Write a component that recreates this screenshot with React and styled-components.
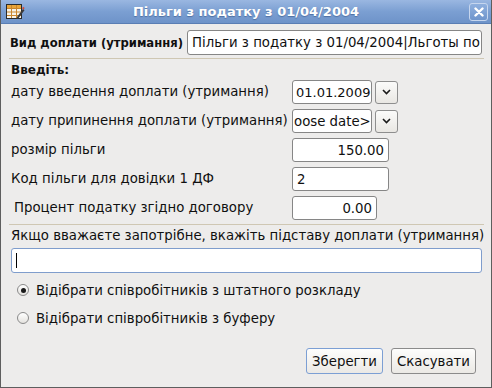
import React from "react";
import styled, { createGlobalStyle } from "styled-components";

const GlobalStyle = createGlobalStyle`
  html, body {
    margin: 0;
    padding: 0;
    background: #edeceb;
  }
  * {
    box-sizing: border-box;
  }
`;

const TableIcon = () => (
  <svg width="20" height="20" viewBox="0 0 20 20">
    <rect x="1.5" y="2.5" width="15" height="14" fill="#f7f4ea" stroke="#2b2b2b" />
    <rect x="2" y="3" width="14" height="3" fill="#e9a53a" />
    <path d="M2 6.5h14M2 10h14M2 13.5h14M6.5 3v13M11.5 3v13" stroke="#c9862e" strokeWidth="1" />
    <path d="M12 15l6-8 1.5 1.2-6 8-2 0.8z" fill="#3a3a3a" />
    <path d="M17 6.3l1.2-1.5 1.5 1.2-1.2 1.5z" fill="#d24a3a" />
  </svg>
);

const Chevron = () => (
  <svg width="9" height="6" viewBox="0 0 9 6">
    <path d="M1 1l3.5 3.5L8 1" fill="none" stroke="#1a1a1a" strokeWidth="1.6" />
  </svg>
);

const App = () => {
  return (
    <>
      <GlobalStyle />
      <Window>
        <TitleBar>
          <TitleIcon>
            <TableIcon />
          </TitleIcon>
          <TitleText>Пільги з податку з 01/04/2004</TitleText>
          <CloseButton>
            <svg width="10" height="10" viewBox="0 0 10 10">
              <path d="M1.5 1.5l7 7M8.5 1.5l-7 7" stroke="#ffffff" strokeWidth="2.4" strokeLinecap="round" />
            </svg>
          </CloseButton>
        </TitleBar>
        <Body>
          <TopRow>
            <BoldLabel>Вид доплати (утримання)</BoldLabel>
            <Field $flex readOnly value="Пільги з податку з 01/04/2004|Льготы по" />
          </TopRow>
          <Separator />
          <SectionTitle>Введіть:</SectionTitle>
          <FormGrid>
            <Label>дату введення доплати (утримання)</Label>
            <DateGroup>
              <Field $width={80} $date readOnly value="01.01.2009" />
              <DropButton>
                <Chevron />
              </DropButton>
            </DateGroup>

            <Label>дату припинення доплати (утримання)</Label>
            <DateGroup>
              <Field $width={80} $tight readOnly value="oose date>" />
              <DropButton>
                <Chevron />
              </DropButton>
            </DateGroup>

            <Label>розмір пільги</Label>
            <Field $width={97} $right readOnly value="150.00" />

            <Label>Код пільги для довідки 1 ДФ</Label>
            <Field $width={97} readOnly value="2" />

            <Label $indent>Процент податку згідно договору</Label>
            <Field $width={85} $right readOnly value="0.00" />
          </FormGrid>
          <Separator />
          <Label>Якщо вважаєте запотрібне, вкажіть підставу доплати (утримання)</Label>
          <WideField>
            <Caret />
          </WideField>
          <RadioList>
            <RadioRow>
              <RadioCircle $checked />
              <span>Відібрати співробітників з штатного розкладу</span>
            </RadioRow>
            <RadioRow>
              <RadioCircle />
              <span>Відібрати співробітників з буферу</span>
            </RadioRow>
          </RadioList>
          <ButtonBar>
            <ActionButton $focused>Зберегти</ActionButton>
            <ActionButton>Скасувати</ActionButton>
          </ButtonBar>
        </Body>
      </Window>
    </>
  );
};

export default App;

const Window = styled.div`
  width: 492px;
  height: 388px;
  display: flex;
  flex-direction: column;
  background: #edeceb;
  border: 1px solid #5e5e5e;
  border-top: none;
  font-family: "DejaVu Sans", "Liberation Sans", sans-serif;
  font-size: 13.3px;
  color: #101010;
  overflow: hidden;
`;

const TitleBar = styled.div`
  height: 24px;
  margin: 0 -1px;
  display: flex;
  align-items: center;
  padding: 0 3px 0 4px;
  background: linear-gradient(#9ab7e1, #7b9fd2 50%, #6e93c9);
  border-bottom: 1px solid #5a7eb4;
  border-left: 1px solid #5a7eb4;
  border-right: 1px solid #5a7eb4;
`;

const TitleIcon = styled.div`
  width: 20px;
  height: 20px;
  display: flex;
`;

const TitleText = styled.div`
  flex: 1;
  text-align: center;
  color: #ffffff;
  font-weight: bold;
  font-size: 13px;
  text-shadow: 0 1px 1px rgba(40, 70, 120, 0.5);
  padding-right: 2px;
`;

const CloseButton = styled.div`
  width: 19px;
  height: 18px;
  border: 1px solid #c6d6ee;
  border-radius: 3px;
  background: linear-gradient(#8fb0de, #6f95cc);
  display: flex;
  align-items: center;
  justify-content: center;
`;

const Body = styled.div`
  flex: 1;
  display: flex;
  flex-direction: column;
  padding: 6px 8px 0 9px;
`;

const TopRow = styled.div`
  display: flex;
  align-items: center;
  gap: 4px;
  height: 25px;
  margin-right: 1px;
`;

const BoldLabel = styled.span`
  font-weight: bold;
  font-size: 11.6px;
  white-space: nowrap;
`;

const Field = styled.input`
  height: ${(p) => (p.$flex ? "25px" : "24px")};
  ${(p) => (p.$flex ? "flex: 1; min-width: 0;" : `width: ${p.$width}px;`)}
  border: 1px solid #868686;
  border-radius: 3px;
  background: #ffffff;
  font-family: "DejaVu Sans", "Liberation Sans", sans-serif;
  font-size: ${(p) => (p.$date ? "13px" : "13.3px")};
  color: #101010;
  padding: 0 ${(p) => (p.$right ? "4px" : "0")} 0 ${(p) => (p.$tight ? "1px" : p.$date ? "3px" : "4px")};
  text-align: ${(p) => (p.$right ? "right" : "left")};
  outline: none;
`;

const Separator = styled.div`
  height: 1px;
  background: #cfc7b3;
  margin: 3px -1px 3px -1px;
`;

const SectionTitle = styled.div`
  font-weight: bold;
  font-size: 12px;
  height: 16px;
  line-height: 16px;
  margin-left: 1px;
`;

const FormGrid = styled.div`
  display: grid;
  grid-template-columns: 282px auto;
  grid-auto-rows: 24px;
  row-gap: 5px;
  align-items: center;
  justify-items: start;
  margin-top: 2px;
  margin-bottom: 1px;
`;

const Label = styled.span`
  white-space: nowrap;
  padding-left: ${(p) => (p.$indent ? "4px" : "1px")};
  line-height: 16px;
`;

const DateGroup = styled.div`
  display: flex;
  gap: 3px;
  align-items: center;
`;

const DropButton = styled.div`
  width: 23px;
  height: 23px;
  border: 1px solid #8e8e8e;
  border-radius: 3px;
  background: linear-gradient(#fbfbfa, #e9e7e3);
  display: flex;
  align-items: center;
  justify-content: center;
`;

const WideField = styled.div`
  height: 25px;
  margin: 4px 1px 0 1px;
  border: 1px solid #7f9dcc;
  border-radius: 3px;
  background: #ffffff;
  display: flex;
  align-items: center;
  padding-left: 4px;
`;

const Caret = styled.div`
  width: 1px;
  height: 15px;
  background: #000000;
`;

const RadioList = styled.div`
  display: flex;
  flex-direction: column;
  gap: 12px;
  margin-top: 9px;
  padding-left: 7px;
`;

const RadioRow = styled.label`
  display: flex;
  align-items: center;
  gap: 7px;
  height: 16px;
`;

const RadioCircle = styled.span`
  width: 12px;
  height: 12px;
  border-radius: 50%;
  border: 1px solid #8a8a8a;
  background: linear-gradient(#ffffff, #e4e2de);
  display: flex;
  align-items: center;
  justify-content: center;

  &::after {
    content: "";
    width: 5px;
    height: 5px;
    border-radius: 50%;
    background: #1a1a1a;
    display: ${(p) => (p.$checked ? "block" : "none")};
  }
`;

const ButtonBar = styled.div`
  display: flex;
  justify-content: flex-end;
  gap: 8px;
  margin-top: 22px;
  padding-right: 7px;
`;

const ActionButton = styled.button`
  height: 26px;
  padding: 0 5px;
  border: 1px solid ${(p) => (p.$focused ? "#7c9fd4" : "#8b8b8b")};
  border-radius: 3px;
  background: linear-gradient(#fdfdfc, #ebe9e5);
  font-family: "DejaVu Sans", "Liberation Sans", sans-serif;
  font-size: 13.3px;
  color: #101010;
`;
